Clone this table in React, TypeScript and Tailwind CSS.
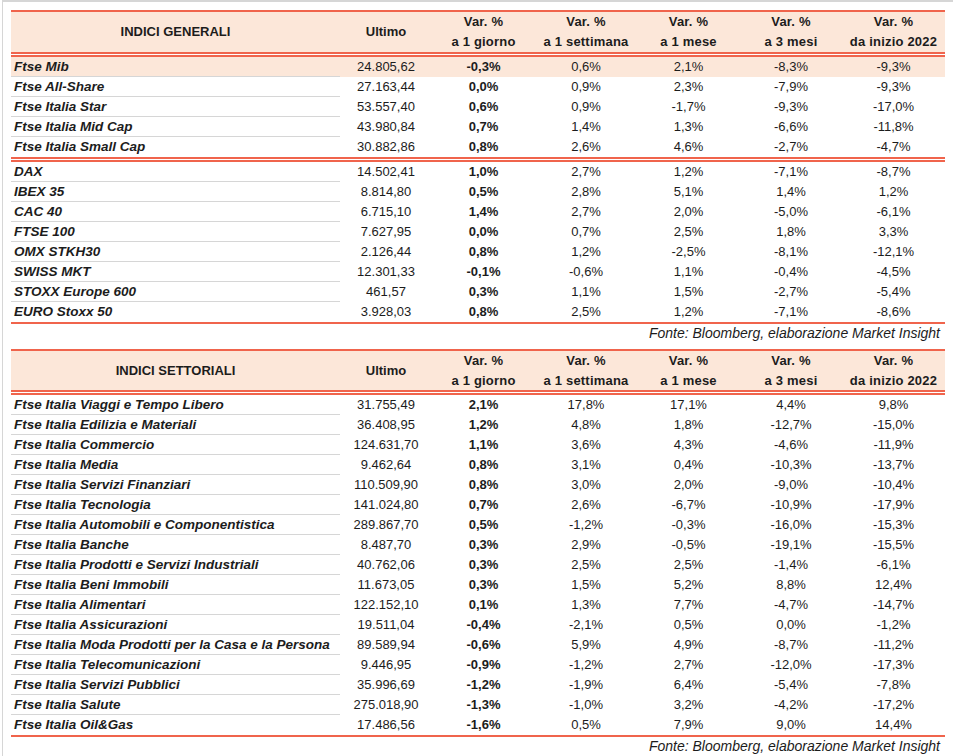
const COLS = "grid grid-cols-[329px_92px_103px_102px_103px_102px_103px]";

type Row = [string, string, string, string, string, string, string];

const generali: Row[][] = [
  [
    ["Ftse Mib", "24.805,62", "-0,3%", "0,6%", "2,1%", "-8,3%", "-9,3%"],
    ["Ftse All-Share", "27.163,44", "0,0%", "0,9%", "2,3%", "-7,9%", "-9,3%"],
    ["Ftse Italia Star", "53.557,40", "0,6%", "0,9%", "-1,7%", "-9,3%", "-17,0%"],
    ["Ftse Italia Mid Cap", "43.980,84", "0,7%", "1,4%", "1,3%", "-6,6%", "-11,8%"],
    ["Ftse Italia Small Cap", "30.882,86", "0,8%", "2,6%", "4,6%", "-2,7%", "-4,7%"],
  ],
  [
    ["DAX", "14.502,41", "1,0%", "2,7%", "1,2%", "-7,1%", "-8,7%"],
    ["IBEX 35", "8.814,80", "0,5%", "2,8%", "5,1%", "1,4%", "1,2%"],
    ["CAC 40", "6.715,10", "1,4%", "2,7%", "2,0%", "-5,0%", "-6,1%"],
    ["FTSE 100", "7.627,95", "0,0%", "0,7%", "2,5%", "1,8%", "3,3%"],
    ["OMX STKH30", "2.126,44", "0,8%", "1,2%", "-2,5%", "-8,1%", "-12,1%"],
    ["SWISS MKT", "12.301,33", "-0,1%", "-0,6%", "1,1%", "-0,4%", "-4,5%"],
    ["STOXX Europe 600", "461,57", "0,3%", "1,1%", "1,5%", "-2,7%", "-5,4%"],
    ["EURO Stoxx 50", "3.928,03", "0,8%", "2,5%", "1,2%", "-7,1%", "-8,6%"],
  ],
];

const settoriali: Row[][] = [
  [
    ["Ftse Italia Viaggi e Tempo Libero", "31.755,49", "2,1%", "17,8%", "17,1%", "4,4%", "9,8%"],
    ["Ftse Italia Edilizia e Materiali", "36.408,95", "1,2%", "4,8%", "1,8%", "-12,7%", "-15,0%"],
    ["Ftse Italia Commercio", "124.631,70", "1,1%", "3,6%", "4,3%", "-4,6%", "-11,9%"],
    ["Ftse Italia Media", "9.462,64", "0,8%", "3,1%", "0,4%", "-10,3%", "-13,7%"],
    ["Ftse Italia Servizi Finanziari", "110.509,90", "0,8%", "3,0%", "2,0%", "-9,0%", "-10,4%"],
    ["Ftse Italia Tecnologia", "141.024,80", "0,7%", "2,6%", "-6,7%", "-10,9%", "-17,9%"],
    ["Ftse Italia Automobili e Componentistica", "289.867,70", "0,5%", "-1,2%", "-0,3%", "-16,0%", "-15,3%"],
    ["Ftse Italia Banche", "8.487,70", "0,3%", "2,9%", "-0,5%", "-19,1%", "-15,5%"],
    ["Ftse Italia Prodotti e Servizi Industriali", "40.762,06", "0,3%", "2,5%", "2,5%", "-1,4%", "-6,1%"],
    ["Ftse Italia Beni Immobili", "11.673,05", "0,3%", "1,5%", "5,2%", "8,8%", "12,4%"],
    ["Ftse Italia Alimentari", "122.152,10", "0,1%", "1,3%", "7,7%", "-4,7%", "-14,7%"],
    ["Ftse Italia Assicurazioni", "19.511,04", "-0,4%", "-2,1%", "0,5%", "0,0%", "-1,2%"],
    ["Ftse Italia Moda Prodotti per la Casa e la Persona", "89.589,94", "-0,6%", "5,9%", "4,9%", "-8,7%", "-11,2%"],
    ["Ftse Italia Telecomunicazioni", "9.446,95", "-0,9%", "-1,2%", "2,7%", "-12,0%", "-17,3%"],
    ["Ftse Italia Servizi Pubblici", "35.996,69", "-1,2%", "-1,9%", "6,4%", "-5,4%", "-7,8%"],
    ["Ftse Italia Salute", "275.018,90", "-1,3%", "-1,0%", "3,2%", "-4,2%", "-17,2%"],
    ["Ftse Italia Oil&Gas", "17.486,56", "-1,6%", "0,5%", "7,9%", "9,0%", "14,4%"],
  ],
];

const periods = ["a 1 giorno", "a 1 settimana", "a 1 mese", "a 3 mesi", "da inizio 2022"];

// Excel style double border between blocks
function DoubleLine() {
  return <div className="h-[5px] border-y-2 border-[#f0644c] bg-white" />;
}

function DataTable({
  title,
  blocks,
  headerHeight,
  highlightFirst,
}: {
  title: string;
  blocks: Row[][];
  headerHeight: string;
  highlightFirst?: boolean;
}) {
  return (
    <div>
      <div className="border-t-2 border-[#f0644c]">
        <div className={`${COLS} ${headerHeight} bg-[#fce7d9] font-bold`}>
          <div className="flex items-center justify-center">{title}</div>
          <div className="flex items-center justify-center">Ultimo</div>
          {periods.map((p) => (
            <div key={p} className="flex flex-col items-center justify-center leading-[20px] tracking-[0.2px]">
              <span>Var. %</span>
              <span>{p}</span>
            </div>
          ))}
        </div>
      </div>
      {blocks.map((rows, b) => (
        <div key={b}>
          <DoubleLine />
          {rows.map((r, i) => {
            const last = i === rows.length - 1;
            const hl = highlightFirst && b === 0 && i === 0;
            return (
              <div key={r[0]} className={`${COLS} h-[20px] ${hl ? "bg-[#fce7d9]" : ""}`}>
                <div
                  className={`flex h-[20px] items-center pl-[3px] pt-[1px] text-[13.5px] font-bold italic ${
                    last ? "" : "border-b border-[#d6d6d6]"
                  }`}
                >
                  {r[0]}
                </div>
                {r.slice(1).map((v, j) => (
                  <div
                    key={j}
                    className={`flex items-center justify-center ${j === 1 ? "font-bold" : ""}`}
                  >
                    {v}
                  </div>
                ))}
              </div>
            );
          })}
        </div>
      ))}
      <div className="border-t-2 border-[#f0644c]" />
      <div className="flex h-[18px] items-center justify-end pr-[5px] text-[14px] italic">
        Fonte: Bloomberg, elaborazione Market Insight
      </div>
    </div>
  );
}

export default function App() {
  return (
    <div className="min-h-screen bg-white">
      <div
        className="ml-[2px] min-h-screen border-l border-t-2 border-[#d6d6d6] pl-[8px] pt-[8px] text-[13px] text-[#1c1c1c]"
        style={{ fontFamily: '"Liberation Sans", Arial, sans-serif' }}
      >
        <div className="w-[934px]">
          <DataTable title="INDICI GENERALI" blocks={generali} headerHeight="h-[40px]" highlightFirst />
          <div className="h-[7px]" />
          <DataTable title="INDICI SETTORIALI" blocks={settoriali} headerHeight="h-[39px]" />
        </div>
      </div>
    </div>
  );
}
